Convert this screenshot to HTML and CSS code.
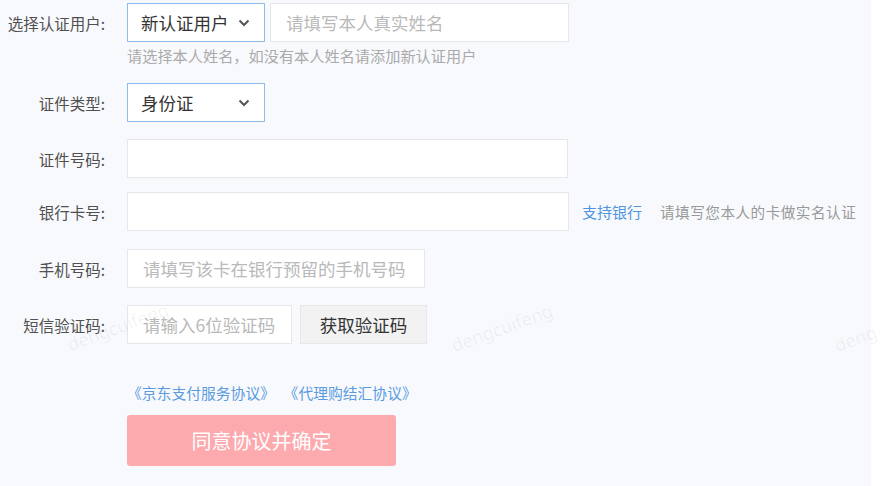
FILE: index.html
```html
<!DOCTYPE html>
<html lang="zh-CN">
<head>
<meta charset="utf-8">
<title>实名认证</title>
<link rel="stylesheet" href="styles.css">
</head>
<body>
<div class="page">
  <form class="form">
    <div class="row row-user">
      <label class="label">选择认证用户:</label>
      <div class="select select-user">
        <span class="select-text">新认证用户</span>
        <svg class="chev" width="12" height="8" viewBox="0 0 12 8"><path d="M1.5 1.5 L6 6 L10.5 1.5" fill="none" stroke="#555" stroke-width="2"/></svg>
      </div>
      <input class="input input-name" type="text" placeholder="请填写本人真实姓名">
    </div>
    <div class="hint">请选择本人姓名，如没有本人姓名请添加新认证用户</div>

    <div class="row row-type">
      <label class="label">证件类型:</label>
      <div class="select select-type">
        <span class="select-text">身份证</span>
        <svg class="chev" width="12" height="8" viewBox="0 0 12 8"><path d="M1.5 1.5 L6 6 L10.5 1.5" fill="none" stroke="#555" stroke-width="2"/></svg>
      </div>
    </div>

    <div class="row row-id">
      <label class="label">证件号码:</label>
      <input class="input input-wide" type="text">
    </div>

    <div class="row row-card">
      <label class="label">银行卡号:</label>
      <input class="input input-wide2" type="text">
      <a class="bank-link">支持银行</a>
      <span class="side-hint">请填写您本人的卡做实名认证</span>
    </div>

    <div class="row row-phone">
      <label class="label">手机号码:</label>
      <input class="input input-phone" type="text" placeholder="请填写该卡在银行预留的手机号码">
    </div>

    <div class="row row-sms">
      <label class="label">短信验证码:</label>
      <input class="input input-code" type="text" placeholder="请输入6位验证码">
      <button type="button" class="code-btn">获取验证码</button>
    </div>

    <div class="agreements">
      <a class="agree-link">《京东支付服务协议》</a><a class="agree-link agree-second">《代理购结汇协议》</a>
    </div>

    <button type="button" class="submit">同意协议并确定</button>
  </form>
  <span class="wm wm1">dengcuifeng</span>
  <span class="wm wm2">dengcuifeng</span>
  <span class="wm wm3">deng</span>
</div>
</body>
</html>
```
FILE: styles.css
```css
* { box-sizing: border-box; }
html, body { margin: 0; padding: 0; background: #ffffff; }
body {
  font-family: "Noto Sans CJK SC", "Noto Sans", "Liberation Sans", sans-serif;
  overflow: hidden;
}
.page {
  position: relative;
  width: 871px;
  height: 486px;
  background: #f8f9fd;
}
.form {
  padding-top: 3px;
  display: flex;
  flex-direction: column;
}
.row {
  display: flex;
  align-items: center;
  height: 39px;
}
.label {
  width: 105px;
  margin-right: 22px;
  text-align: right;
  font-size: 15.5px;
  color: #505050;
  flex: none;
}
.select {
  width: 138px;
  height: 39px;
  border: 1px solid #8fbbea;
  background: #fff;
  display: flex;
  align-items: center;
  justify-content: space-between;
  padding: 0 13px 0 13px;
  flex: none;
}
.select-text {
  font-size: 17.5px;
  color: #333;
}
.chev { display: block; margin-right: 1px; }
.input {
  height: 39px;
  border: 1px solid #e6e7ea;
  background: #fff;
  padding: 0 15px;
  font-family: inherit;
  font-size: 17.5px;
  color: #333;
  outline: none;
  flex: none;
}
.input::placeholder { color: #b9b9b9; }
.input-name { width: 299px; margin-left: 5px; }
.input-wide { width: 441px; }
.input-wide2 { width: 442px; }
.input-phone { width: 298px; }
.input-code { width: 165px; }
.hint {
  margin: 3px 0 0 127px;
  font-size: 15.2px;
  line-height: 20px;
  color: #aaa;
}
.row-type { margin-top: 18px; }
.row-id { margin-top: 17px; }
.row-card { margin-top: 14px; }
.row-phone { margin-top: 18px; }
.row-sms { margin-top: 17px; }
.bank-link {
  margin-left: 13px;
  font-size: 15px;
  color: #4f95dd;
}
.side-hint {
  margin-left: 18px;
  font-size: 14.6px;
  color: #999;
  letter-spacing: 0.5px;
}
.code-btn {
  margin-left: 8px;
  width: 127px;
  height: 39px;
  border: 1px solid #e8e8e8;
  background: #f2f2f2;
  font-family: inherit;
  font-size: 17.5px;
  color: #333;
  padding: 0;
}
.agreements {
  margin: 39px 0 0 127px;
  font-size: 14.8px;
  line-height: 20px;
  color: #5a9be0;
}
.agree-link { color: #5a9be0; }
.agree-second { margin-left: 16px; }
.submit {
  margin: 12px 0 0 127px;
  width: 269px;
  height: 51px;
  border: none;
  border-radius: 3px;
  background: #fcaaae;
  color: #fff;
  font-family: inherit;
  font-size: 20px;
  padding: 0;
}
.wm {
  position: absolute;
  font-family: "Noto Sans", "Liberation Sans", sans-serif;
  font-size: 18px;
  color: rgba(0, 0, 0, 0.06);
  transform: rotate(-20deg);
  transform-origin: left bottom;
  pointer-events: none;
  white-space: nowrap;
}
.wm1 { left: 72px; top: 332px; }
.wm2 { left: 456px; top: 333px; }
.wm3 { left: 839px; top: 333px; }
```
